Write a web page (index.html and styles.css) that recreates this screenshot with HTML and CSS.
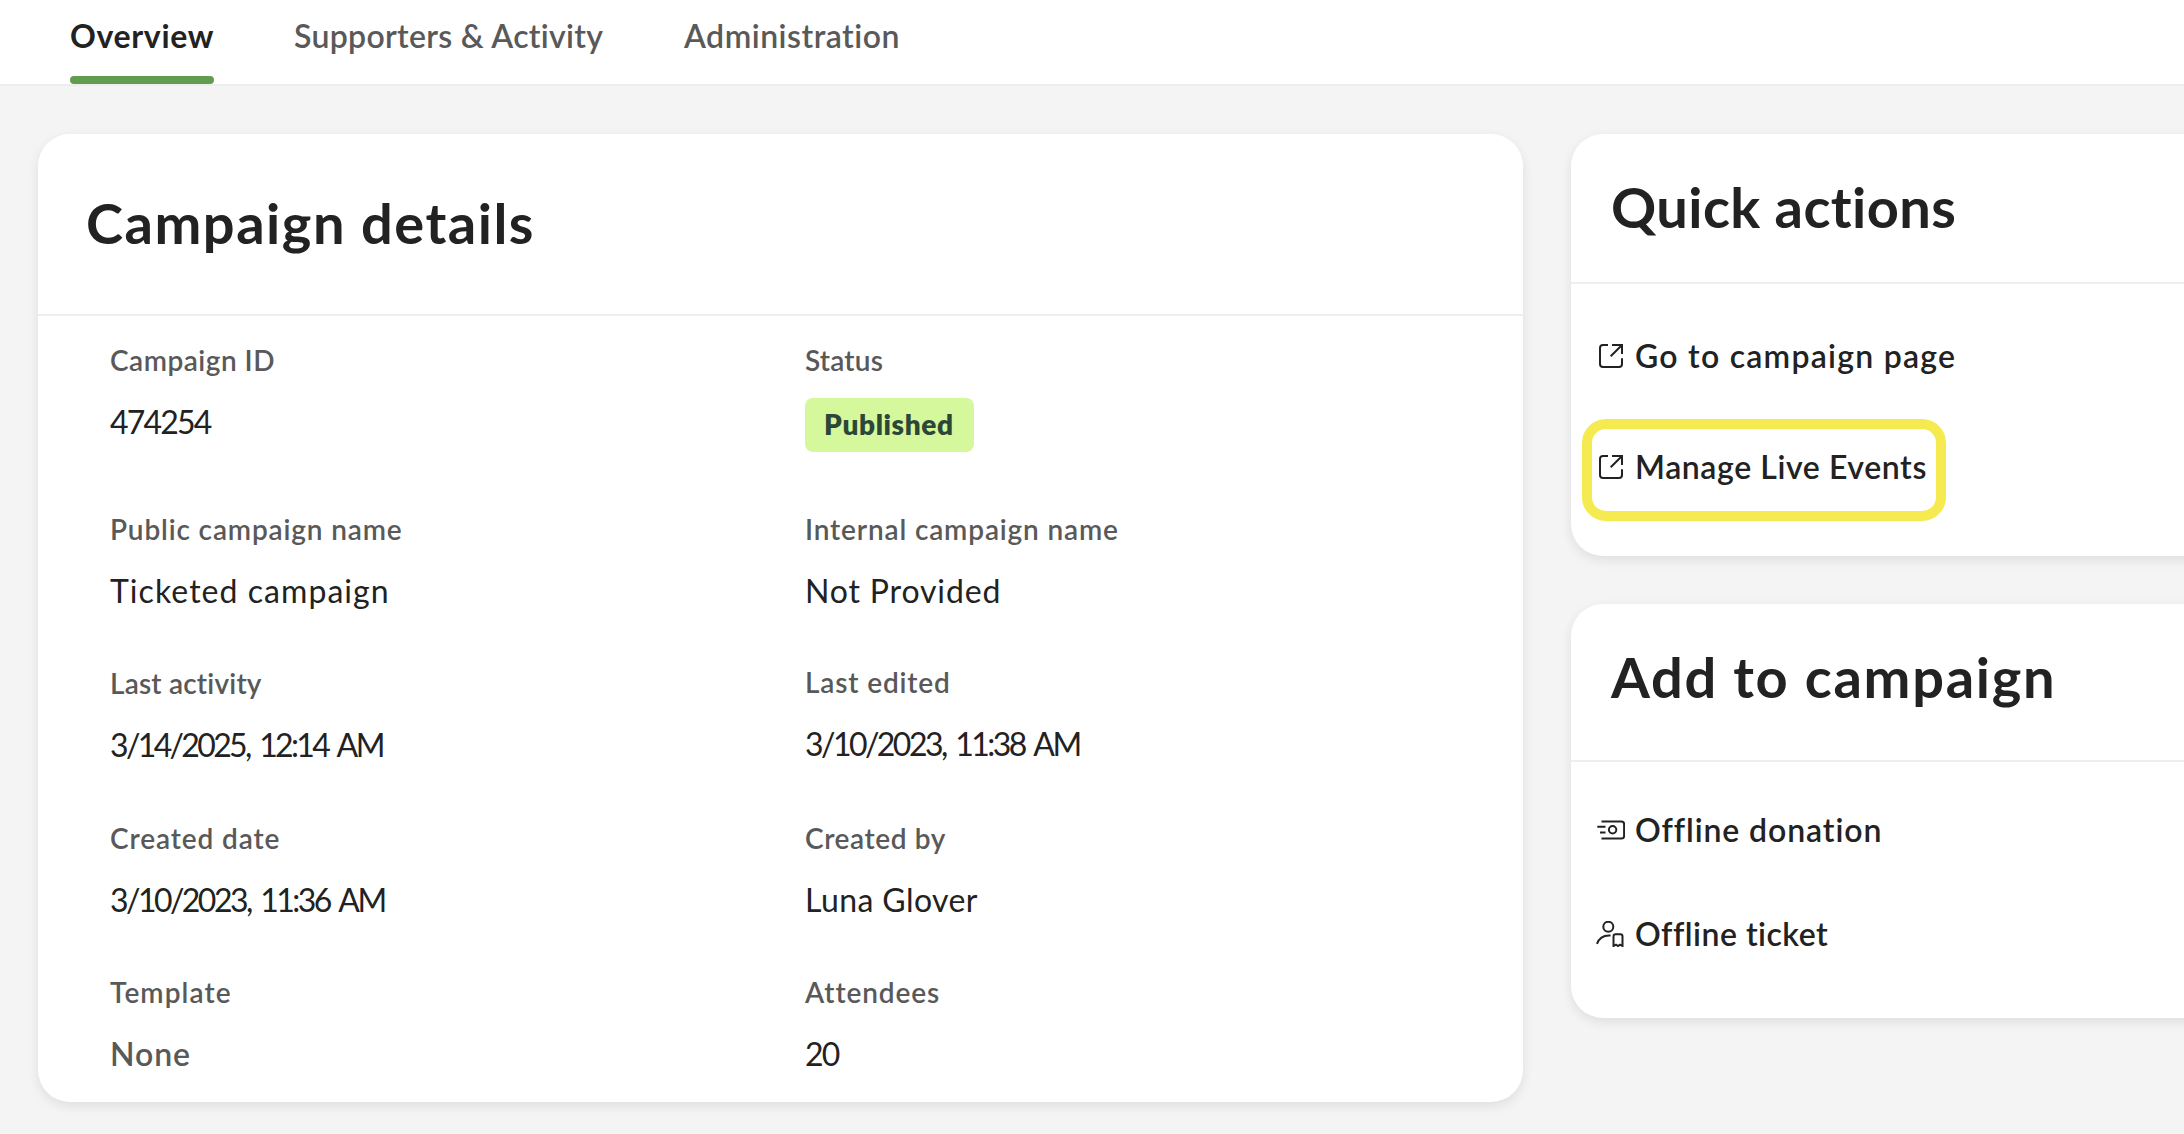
FILE: index.html
```html
<!DOCTYPE html>
<html lang="en">
<head>
<meta charset="utf-8">
<title>Campaign overview</title>
<link rel="stylesheet" href="styles.css">
</head>
<body>
<svg class="sprite" aria-hidden="true">
  <symbol id="icon-external" viewBox="0 0 24 24">
    <path d="M9 1H4a3 3 0 0 0-3 3v16a3 3 0 0 0 3 3h16a3 3 0 0 0 3-3v-5.7M13 1h10v9M23 1 11.700 12.200"/>
  </symbol>
  <symbol id="icon-cash" viewBox="0 0 28 20">
    <path d="M4.500 1.400h20a2.600 2.600 0 0 1 2.600 2.600v12a2.600 2.600 0 0 1-2.600 2.600h-20M.3 6.800h8.200M3 12.500h5.500"/>
    <circle cx="15.600" cy="9.700" r="3.700"/>
  </symbol>
  <symbol id="icon-ticket" viewBox="0 0 28 26">
    <circle cx="12.300" cy="5.800" r="5"/>
    <path d="M1 22.800c2-5.600 7-8.800 13.600-8.300M17.500 25v-9.500a2.200 2.200 0 0 1 2.200-2.200h4.600a2.200 2.200 0 0 1 2.200 2.200V25l-2.500-1.400-2 1.400-2-1.400z"/>
  </symbol>
</svg>

<nav class="tabs">
  <a class="tab tab-active track-70">Overview</a>
  <a class="tab tab-supporters track-30">Supporters &amp; Activity</a>
  <a class="tab track-50">Administration</a>
</nav>

<main class="page">
  <section class="card details">
    <header class="details-head"><h2 class="title track-150">Campaign details</h2></header>
    <dl class="fields">
      <div class="field field-first"><dt class="track-50">Campaign ID</dt><dd class="digits">474254</dd></div>
      <div class="field field-first"><dt class="track-20">Status</dt><dd class="status"><span class="badge track-60">Published</span></dd></div>
      <div class="field"><dt class="track-85">Public campaign name</dt><dd class="track-105">Ticketed campaign</dd></div>
      <div class="field"><dt class="track-85">Internal campaign name</dt><dd class="track-85">Not Provided</dd></div>
      <div class="field"><dt class="track-20">Last activity</dt><dd class="date">3/14/2025, 12:14 AM</dd></div>
      <div class="field field-raised"><dt class="track-85">Last edited</dt><dd class="date date-wide">3/10/2023, 11:38 AM</dd></div>
      <div class="field"><dt class="track-90">Created date</dt><dd class="date date-wide">3/10/2023, 11:36 AM</dd></div>
      <div class="field"><dt class="track-60">Created by</dt><dd class="track-40">Luna Glover</dd></div>
      <div class="field"><dt class="track-110">Template</dt><dd class="empty track-90">None</dd></div>
      <div class="field"><dt class="track-90">Attendees</dt><dd class="digits">20</dd></div>
    </dl>
  </section>

  <aside class="side">
    <section class="card quick">
      <header class="quick-head"><h2 class="title track-40">Quick actions</h2></header>
      <div class="actions quick-actions">
        <a class="action"><svg class="icon icon-external"><use href="#icon-external"/></svg><span class="track-125">Go to campaign page</span></a>
        <a class="action highlight"><svg class="icon icon-external"><use href="#icon-external"/></svg><span class="track-60">Manage Live Events</span></a>
      </div>
    </section>
    <section class="card add">
      <header class="add-head"><h2 class="title track-170">Add to campaign</h2></header>
      <div class="actions add-actions">
        <a class="action"><svg class="icon icon-cash"><use href="#icon-cash"/></svg><span class="track-90">Offline donation</span></a>
        <a class="action"><svg class="icon icon-ticket"><use href="#icon-ticket"/></svg><span class="track-50">Offline ticket</span></a>
      </div>
    </section>
  </aside>
</main>
</body>
</html>
```
FILE: styles.css
```css
* { box-sizing: border-box; }

body {
  margin: 0;
  height: 1134px;
  overflow: hidden;
  background: #f4f4f4;
  color: #222;
  font-family: Lato, "Open Sans", sans-serif;
  font-size: 32px;
  line-height: 48px;
}

.sprite { position: absolute; width: 0; height: 0; }

/* Tabs */
.tabs {
  display: flex;
  align-items: flex-start;
  height: 86px;
  padding-left: 70px;
  background: #fff;
  border-bottom: 2px solid #eee;
}
.tab {
  height: 84px;
  padding-top: 12px;
  color: #595959;
  font-weight: 600;
  white-space: nowrap;
}
.tab-active {
  display: flex;
  flex-direction: column;
  justify-content: space-between;
  width: 144px;
  margin-right: 80px;
  color: #222;
  font-weight: 700;
}
.tab-active::after {
  content: "";
  height: 8px;
  border-radius: 4px;
  background: #629d4f;
}
.tab-supporters { width: 390px; }

/* Cards */
.page {
  display: grid;
  grid-template-columns: 1485px 720px;
  column-gap: 48px;
  align-items: start;
  padding: 48px 0 0 38px;
}
.card {
  background: #fff;
  border-radius: 32px;
  box-shadow: 0 4px 12px rgba(0, 0, 0, .09);
}
.title {
  margin: 0;
  font-size: 56px;
  line-height: 64px;
  font-weight: 700;
}

/* Campaign details */
.details { height: 968px; }
.details-head {
  height: 182px;
  padding: 57px 0 0 48px;
  border-bottom: 2px solid #eee;
}
.fields {
  display: grid;
  grid-template-columns: 695px 1fr;
  margin: 0;
  padding: 24px 0 0 72px;
}
.field { height: 154.400px; }
.field-first { height: 169px; }
.field-raised { margin-top: -1px; }
dt {
  margin-bottom: 18px;
  color: #595959;
  font-size: 28px;
  font-weight: 600;
  line-height: 40px;
}
dd { margin: 0; }
.empty { color: #595959; font-weight: 600; }
.digits { letter-spacing: -1.800px; }
.date { letter-spacing: -2.650px; word-spacing: 4px; }
.date-wide { letter-spacing: -2.550px; }
.status { margin-top: 1px; display: flex; }
.badge {
  width: 169px;
  height: 54px;
  padding-left: 19px;
  border-radius: 8px;
  background: #d4f89b;
  color: #2c4737;
  font-size: 28px;
  font-weight: 800;
  line-height: 53px;
}

/* Side column */
.side { display: grid; row-gap: 48px; }
.quick { height: 422px; }
.add { height: 414px; }
.quick-head {
  height: 150px;
  padding: 41px 0 0 40px;
  border-bottom: 2px solid #eee;
}
.add-head {
  height: 158px;
  padding: 41px 0 0 40px;
  border-bottom: 2px solid #eee;
}
.actions { display: flex; flex-direction: column; align-items: flex-start; }
.quick-actions { padding: 48px 0 0 11px; gap: 39px; }
.add-actions { padding: 44px 0 0 11px; gap: 56px; }
.action {
  display: grid;
  grid-template-columns: 37px auto;
  column-gap: 16px;
  height: 48px;
  align-items: center;
  font-weight: 600;
  white-space: nowrap;
}
.highlight {
  width: 364px;
  height: 102px;
  padding-bottom: 6px;
  border: 10px solid #f5eb50;
  border-radius: 24px;
  grid-template-columns: 27px auto;
}
.icon {
  justify-self: end;
  fill: none;
  stroke: #222;
  stroke-width: 2;
}
.icon-external { width: 24px; height: 24px; margin-right: -4px; }
.icon-cash { width: 28px; height: 20px; margin-right: -6px; }
.icon-ticket { width: 28px; height: 26px; margin-right: -5px; }

/* Letter spacing steps */
.track-20 { letter-spacing: .2px; }
.track-30 { letter-spacing: .3px; }
.track-40 { letter-spacing: .4px; }
.track-50 { letter-spacing: .5px; }
.track-60 { letter-spacing: .6px; }
.track-70 { letter-spacing: .65px; }
.track-85 { letter-spacing: .85px; }
.track-90 { letter-spacing: .9px; }
.track-105 { letter-spacing: 1.05px; }
.track-110 { letter-spacing: 1.1px; }
.track-125 { letter-spacing: 1.25px; }
.track-150 { letter-spacing: 1.5px; }
.track-170 { letter-spacing: 1.7px; }
```
